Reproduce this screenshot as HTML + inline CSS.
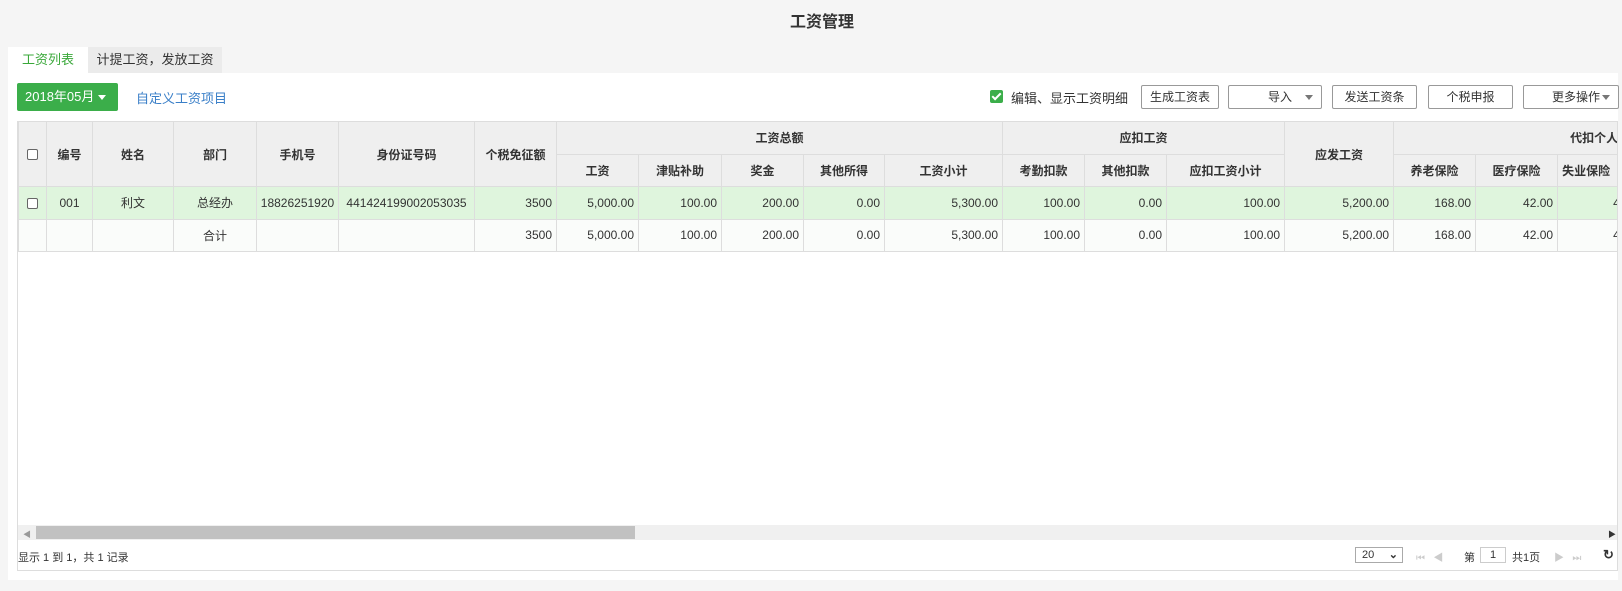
<!DOCTYPE html>
<html><head><meta charset="utf-8"><style>
*{box-sizing:border-box;margin:0;padding:0}
body{width:1622px;height:591px;background:#f5f5f5;font-family:"Liberation Sans","Noto Sans CJK SC",sans-serif;font-size:12px;color:#333;position:relative;overflow:hidden}
.abs{position:absolute}
.title{left:0;width:1644px;top:8px;text-align:center;font-size:16px;font-weight:bold;color:#333}
.tab1{left:8px;top:47px;width:80px;height:27px;background:#fff;color:#3aa83a;font-size:13px;line-height:26px;text-align:center}
.tab2{left:88px;top:47px;width:134px;height:26px;background:#ebebeb;color:#333;font-size:13px;line-height:26px;text-align:center}
.panel{left:8px;top:73px;width:1610px;height:507px;background:#fff}
.date{left:17px;top:83px;width:101px;height:28px;background:#3bae4a;border-radius:2px;color:#fff;font-size:13px;line-height:28px;padding-left:8px}
.date:after{content:"";position:absolute;right:12px;top:12px;border:4px solid transparent;border-top:5px solid #fff}
.link{left:136px;top:88px;color:#3a7fc8;font-size:13px}
.chk{left:990px;top:90px;width:13px;height:13px;background:#3bae4a;border-radius:2px}
.chk:after{content:"";position:absolute;left:4px;top:1px;width:3px;height:7px;border:solid #fff;border-width:0 2px 2px 0;transform:rotate(45deg)}
.chkt{left:1011px;top:88px;font-size:13px}
.btn{top:85px;height:24px;border:1px solid #999;background:#fff;font-size:12px;line-height:22px;text-align:center;border-radius:2px}
.tri:after{content:"";position:absolute;right:8px;top:9px;border:4px solid transparent;border-top:5px solid #777}
.box{left:17px;top:121px;width:1601px;height:450px;border:1px solid #ddd;border-top:none;overflow:hidden}
.wrap{position:absolute;left:0;top:0;width:1800px}
table{border-collapse:collapse;table-layout:fixed;width:1656px}
td,th{border:1px solid #ddd;height:32.5px;font-size:12px;white-space:nowrap;overflow:hidden}
th{background:#efefef;font-weight:bold;color:#333;text-align:center}
td{text-align:right;padding-right:4px}
td.c{text-align:center;padding:0}
tr.d td{background:#dff5dd}
tr.t td{background:#fafcfa}
.cb{display:inline-block;width:11px;height:11px;border:1px solid #666;border-radius:2px;background:#fff;vertical-align:middle}
.sb{left:0;top:404px;width:1600px;height:15px;background:#f0f0f0}
.thumb{left:18px;top:405px;width:599px;height:13px;background:#c1c1c1}
.foot{left:0;top:428px;font-size:11px}
.sel{left:1337px;top:426px;width:48px;height:16px;border:1px solid #aaa;font-size:11px;padding-left:6px;line-height:14px}
</style></head><body>
<div class="abs title">工资管理</div>
<div class="abs panel"></div>
<div class="abs tab2">计提工资，发放工资</div>
<div class="abs tab1">工资列表</div>
<div class="abs date">2018年05月</div>
<div class="abs link">自定义工资项目</div>
<div class="abs chk"></div>
<div class="abs chkt">编辑、显示工资明细</div>
<div class="abs btn" style="left:1141px;width:78px">生成工资表</div>
<div class="abs btn tri" style="left:1228px;width:94px;padding-left:10px">导入</div>
<div class="abs btn" style="left:1332px;width:85px">发送工资条</div>
<div class="abs btn" style="left:1428px;width:85px">个税申报</div>
<div class="abs btn tri" style="left:1523px;width:96px;padding-left:10px">更多操作</div>
<div class="abs box">
<div class="wrap">
<table>
<colgroup><col style="width:28px"><col style="width:46px"><col style="width:81px"><col style="width:83px"><col style="width:82px"><col style="width:136px"><col style="width:82px"><col style="width:82px"><col style="width:83px"><col style="width:82px"><col style="width:81px"><col style="width:118px"><col style="width:82px"><col style="width:82px"><col style="width:118px"><col style="width:109px"><col style="width:82px"><col style="width:82px"><col style="width:117px"></colgroup>
<tr><th rowspan="2"><span class="cb"></span></th><th rowspan="2">编号</th><th rowspan="2">姓名</th><th rowspan="2">部门</th><th rowspan="2">手机号</th><th rowspan="2">身份证号码</th><th rowspan="2">个税免征额</th><th colspan="5">工资总额</th><th colspan="3">应扣工资</th><th rowspan="2">应发工资</th><th colspan="3" style="text-align:left;padding-left:176px">代扣个人</th></tr>
<tr><th>工资</th><th>津贴补助</th><th>奖金</th><th>其他所得</th><th>工资小计</th><th>考勤扣款</th><th>其他扣款</th><th>应扣工资小计</th><th>养老保险</th><th>医疗保险</th><th style="text-align:left;padding-left:4px">失业保险</th></tr>
<tr class="d"><td class="c"><span class="cb"></span></td><td class="c">001</td><td class="c">利文</td><td class="c">总经办</td><td class="c">18826251920</td><td class="c">441424199002053035</td><td>3500</td><td>5,000.00</td><td>100.00</td><td>200.00</td><td>0.00</td><td>5,300.00</td><td>100.00</td><td>0.00</td><td>100.00</td><td>5,200.00</td><td>168.00</td><td>42.00</td><td style="text-align:left;padding-left:55px">4</td></tr>
<tr class="t"><td></td><td></td><td></td><td class="c">合计</td><td></td><td></td><td>3500</td><td>5,000.00</td><td>100.00</td><td>200.00</td><td>0.00</td><td>5,300.00</td><td>100.00</td><td>0.00</td><td>100.00</td><td>5,200.00</td><td>168.00</td><td>42.00</td><td style="text-align:left;padding-left:55px">4</td></tr>
</table>
</div>
<div class="abs sb"></div>
<div class="abs thumb"></div>
<div class="abs" style="left:5px;top:408px;font-size:8px;color:#999">◀</div>
<div class="abs" style="left:1590px;top:408px;font-size:8px;color:#333">▶</div>
<div class="abs foot">显示 1 到 1，共 1 记录</div>
<div class="abs sel">20 <span style="float:right;margin-right:4px;font-weight:bold">⌄</span></div>
<div class="abs" style="left:1398px;top:428px;color:#ccc;font-size:10px">⏮&nbsp;&nbsp;&nbsp;◀</div>
<div class="abs" style="left:1446px;top:428px;font-size:11px">第</div>
<div class="abs" style="left:1462px;top:426px;width:26px;height:16px;border:1px solid #ccc;text-align:center;font-size:11px;line-height:14px">1</div>
<div class="abs" style="left:1494px;top:428px;font-size:11px">共1页</div>
<div class="abs" style="left:1536px;top:428px;color:#ccc;font-size:10px">▶&nbsp;&nbsp;&nbsp;⏭</div>
<div class="abs" style="left:1585px;top:426px;font-size:13px;font-weight:bold">↻</div>
</div>
</body></html>
